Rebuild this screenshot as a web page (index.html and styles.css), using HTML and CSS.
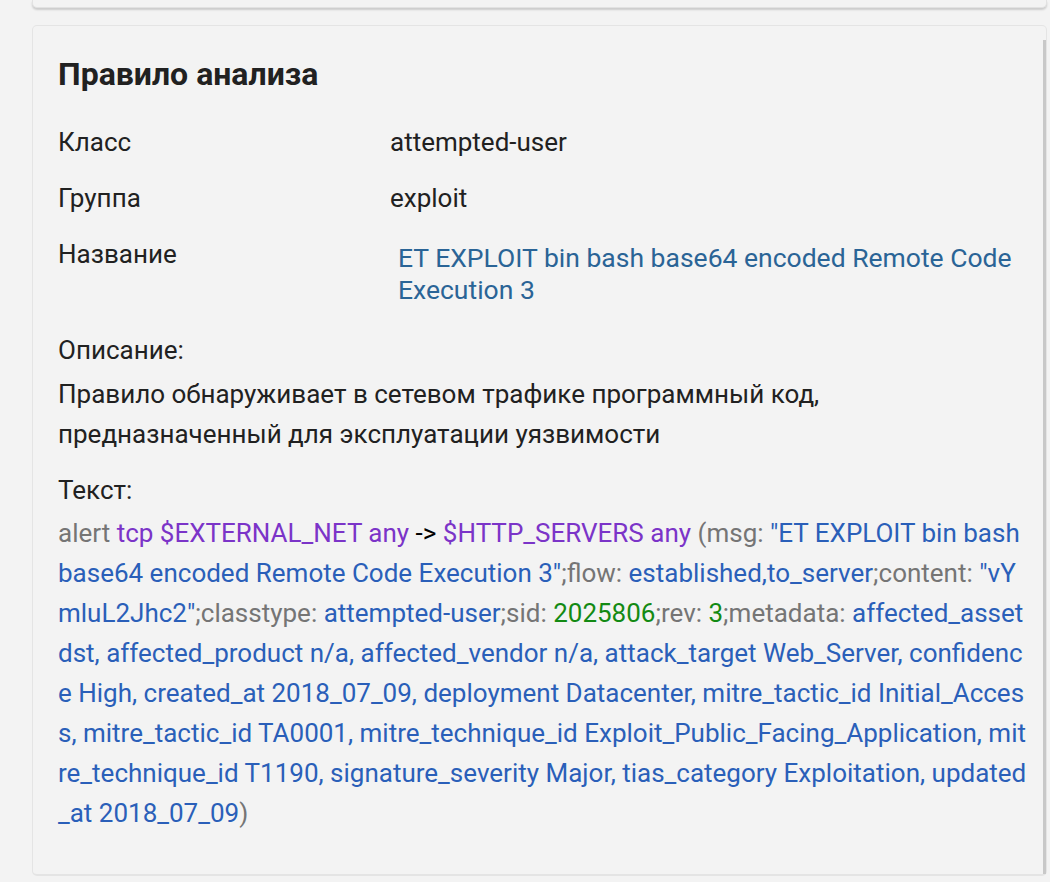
FILE: index.html
```html
<!DOCTYPE html>
<html lang="ru">
<head>
<meta charset="utf-8">
<link rel="stylesheet" href="styles.css">
</head>
<body>
<div class="page">
  <div class="prev-card"></div>
  <section class="card">
    <h2 class="title">Правило анализа</h2>
    <div class="row"><div class="label">Класс</div><div class="value">attempted-user</div></div>
    <div class="row"><div class="label">Группа</div><div class="value">exploit</div></div>
    <div class="row"><div class="label">Название</div><div class="value"><a class="link">ET EXPLOIT bin bash base64 encoded Remote Code Execution 3</a></div></div>
    <div class="block">
      <div class="block-label">Описание:</div>
      <div class="desc">Правило обнаруживает в сетевом трафике программный код, предназначенный для эксплуатации уязвимости</div>
    </div>
    <div class="block">
      <div class="block-label">Текст:</div>
      <div class="code"><span class="g">alert</span> <span class="p">tcp</span> <span class="p">$EXTERNAL_NET</span> <span class="p">any</span> <span class="k">-&gt;</span> <span class="p">$HTTP_SERVERS</span> <span class="p">any</span> <span class="g">(msg: </span><span class="b">"ET EXPLOIT bin bash base64 encoded Remote Code Execution 3"</span><span class="g">;flow: </span><span class="b">established,to_server</span><span class="g">;content: </span><span class="b">"vYmluL2Jhc2"</span><span class="g">;classtype: </span><span class="b">attempted-user</span><span class="g">;sid: </span><span class="n">2025806</span><span class="g">;rev: </span><span class="n">3</span><span class="g">;metadata: </span><span class="b">affected_asset dst, affected_product n/a, affected_vendor n/a, attack_target Web_Server, confidence High, created_at 2018_07_09, deployment Datacenter, mitre_tactic_id Initial_Access, mitre_tactic_id TA0001, mitre_technique_id Exploit_Public_Facing_Application, mitre_technique_id T1190, signature_severity Major, tias_category Exploitation, updated_at 2018_07_09</span><span class="g">)</span></div>
    </div>
  </section>
</div>
</body>
</html>
```
FILE: styles.css
```css
* { box-sizing: border-box; }
html, body { margin: 0; padding: 0; background: #f3f3f3; }
body { font-family: Roboto, "Noto Sans", sans-serif; color: #212121; overflow: hidden; }
.page { padding: 0 3px 0 32px; height: 882px; }
.prev-card {
  height: 8px;
  background: #f3f3f3;
  border: 1px solid #e2e2e2;
  border-top: none;
  border-radius: 0 0 5px 5px;
  box-shadow: 0 2px 2px rgba(0,0,0,0.16);
}
.card {
  position: relative;
  margin-top: 17px;
  height: 851px;
  background: #f3f3f3;
  border: 1px solid #e4e4e4;
  border-bottom-width: 2px;
  border-radius: 5px;
  padding: 28px 18px 0 25px;
}
.card::after {
  content: "";
  position: absolute;
  right: 0;
  top: 14px;
  bottom: 0;
  width: 3px;
  background: #c8c8c8;
}
.title { margin: 0 0 32px; font-size: 32px; font-weight: 700; line-height: 40px; color: #212121; }
.row { display: flex; font-size: 26px; line-height: 32px; margin-bottom: 24px; }
.label { width: 332px; flex: none; }
.value { flex: 1; }
.link { display: block; padding: 4px 0 0 8px; font-size: 26.5px; color: #2a6496; }
.block { font-size: 26px; line-height: 40px; margin-bottom: 16px; }
.desc { margin-top: 4px; }
.code { margin-top: 3px; word-break: break-all; color: #757575; }
.g { color: #757575; }
.p { color: #7b34c8; }
.k { color: #000; }
.b { color: #2a5fb9; }
.n { color: #138a13; }
```
